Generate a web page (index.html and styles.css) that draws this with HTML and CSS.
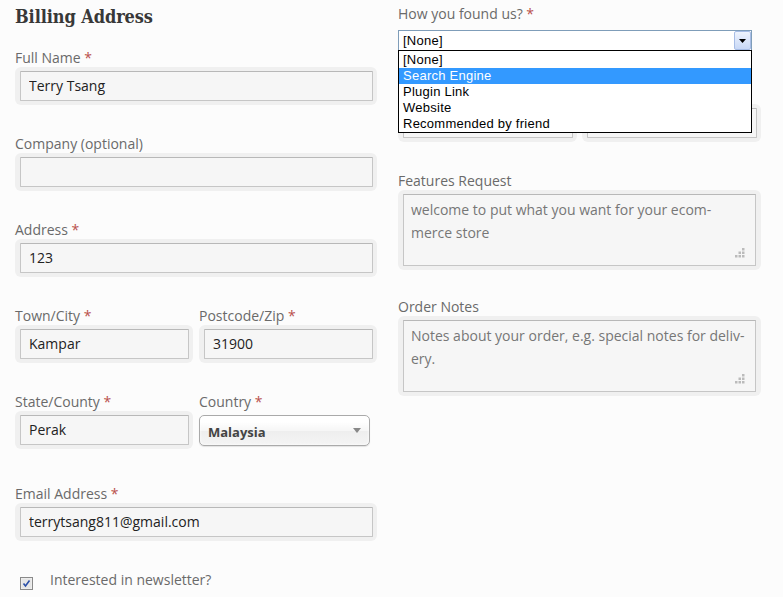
FILE: index.html
```html
<!DOCTYPE html>
<html lang="en">
<head>
<meta charset="utf-8">
<title>Billing Address</title>
<link rel="stylesheet" href="styles.css">
</head>
<body>
<div class="page">
  <div class="col col-left">
    <h3 class="title">Billing Address</h3>

    <div class="field">
      <div class="lbl">Full Name <span class="req">*</span></div>
      <div class="wrap"><input class="inp" type="text" value="Terry Tsang"></div>
    </div>

    <div class="field">
      <div class="lbl">Company (optional)</div>
      <div class="wrap"><input class="inp" type="text" value=""></div>
    </div>

    <div class="field">
      <div class="lbl">Address <span class="req">*</span></div>
      <div class="wrap"><input class="inp" type="text" value="123"></div>
    </div>

    <div class="row">
      <div class="field half">
        <div class="lbl">Town/City <span class="req">*</span></div>
        <div class="wrap"><input class="inp" type="text" value="Kampar"></div>
      </div>
      <div class="field half">
        <div class="lbl">Postcode/Zip <span class="req">*</span></div>
        <div class="wrap"><input class="inp" type="text" value="31900"></div>
      </div>
    </div>

    <div class="row row-tall">
      <div class="field half">
        <div class="lbl">State/County <span class="req">*</span></div>
        <div class="wrap"><input class="inp" type="text" value="Perak"></div>
      </div>
      <div class="field half">
        <div class="lbl">Country <span class="req">*</span></div>
        <div class="country">
          <span class="country-text">Malaysia</span>
          <span class="country-arrow"></span>
        </div>
      </div>
    </div>

    <div class="field">
      <div class="lbl">Email Address <span class="req">*</span></div>
      <div class="wrap"><input class="inp" type="text" value="terrytsang811@gmail.com"></div>
    </div>

    <div class="check-row">
      <svg class="checkbox" width="13" height="13" viewBox="0 0 13 13">
        <rect x="0.5" y="0.5" width="12" height="12" fill="#f4f4f4" stroke="#8a8a8a"/>
        <rect x="1.5" y="1.5" width="10" height="10" fill="#e6e6e6"/>
        <path d="M3.5 6.5 L5.5 9 L9.5 3.5" fill="none" stroke="#2a4fa8" stroke-width="1.6"/>
      </svg>
      <span class="check-text">Interested in newsletter?</span>
    </div>
  </div>

  <div class="col col-right">
    <div class="lbl">How you found us? <span class="req">*</span></div>
    <div class="select-holder">
      <div class="winselect">
        <span class="winselect-text">[None]</span>
        <span class="winselect-btn">
          <svg width="7" height="4" viewBox="0 0 7 4"><path d="M0 0 H7 L3.5 4 Z" fill="#000"/></svg>
        </span>
      </div>
      <ul class="winlist">
        <li>[None]</li>
        <li class="on">Search Engine</li>
        <li>Plugin Link</li>
        <li>Website</li>
        <li>Recommended by friend</li>
      </ul>
    </div>

    <div class="row hidden-row">
      <div class="wrap half-wrap"><input class="inp" type="text" value=""></div>
      <div class="wrap half-wrap"><input class="inp" type="text" value=""></div>
    </div>

    <div class="field tfield">
      <div class="lbl">Features Request</div>
      <div class="wrap twrap">
        <div class="ta">welcome to put what you want for your ecom&shy;merce store
          <svg class="grip" width="10" height="10" viewBox="0 0 10 10"><g fill="#bbbbbb"><rect x="7" y="0" width="2.5" height="2.5"/><rect x="3.5" y="3.5" width="2.5" height="2.5"/><rect x="7" y="3.5" width="2.5" height="2.5"/><rect x="0" y="7" width="2.5" height="2.5"/><rect x="3.5" y="7" width="2.5" height="2.5"/><rect x="7" y="7" width="2.5" height="2.5"/></g></svg>
        </div>
      </div>
    </div>

    <div class="field tfield tfield2">
      <div class="lbl">Order Notes</div>
      <div class="wrap twrap">
        <div class="ta">Notes about your order, e.g. special notes for deliv&shy;ery.
          <svg class="grip" width="10" height="10" viewBox="0 0 10 10"><g fill="#bbbbbb"><rect x="7" y="0" width="2.5" height="2.5"/><rect x="3.5" y="3.5" width="2.5" height="2.5"/><rect x="7" y="3.5" width="2.5" height="2.5"/><rect x="0" y="7" width="2.5" height="2.5"/><rect x="3.5" y="7" width="2.5" height="2.5"/><rect x="7" y="7" width="2.5" height="2.5"/></g></svg>
        </div>
      </div>
    </div>
  </div>
</div>
</body>
</html>
```

FILE: styles.css
```css
html, body {
  margin: 0;
  padding: 0;
  background: #fcfcfc;
}
body {
  font-family: "Open Sans", "Liberation Sans", sans-serif;
  font-size: 14px;
  color: #6a6a6a;
}
.page {
  display: flex;
  gap: 21px;
  padding: 5px 0 0 15px;
}
.col-left {
  width: 362px;
  display: flex;
  flex-direction: column;
}
.col-right {
  width: 363px;
  display: flex;
  flex-direction: column;
}
.title {
  margin: 0 0 20px 0;
  font-family: "DejaVu Serif", serif;
  font-stretch: condensed;
  font-weight: bold;
  font-size: 18px;
  line-height: 24px;
  color: #383838;
  letter-spacing: -0.1px;
}
.lbl {
  line-height: 18px;
  height: 18px;
  color: #6a6a6a;
  white-space: nowrap;
}
.req {
  color: #b9504c;
}
.field {
  display: flex;
  flex-direction: column;
  margin-bottom: 30px;
}
.wrap {
  background: #f0f0f0;
  border-radius: 6px;
  padding: 4px 4px 4px 5px;
}
.inp {
  display: block;
  box-sizing: border-box;
  width: 100%;
  height: 30px;
  margin: 0;
  padding: 0 8px 2px 8px;
  border: 1px solid #c6c6c6;
  border-top-color: #b8b8b8;
  border-radius: 1px;
  background: #f6f6f6;
  font-family: "Open Sans", "Liberation Sans", sans-serif;
  font-size: 14px;
  color: #222;
  outline: none;
}
.row {
  display: flex;
  gap: 6px;
}
.row .field {
  margin-bottom: 30px;
}
.row-tall .field {
  margin-bottom: 36px;
}
.half {
  width: 178px;
}
.country {
  margin-top: 4px;
  box-sizing: border-box;
  width: 171px;
  height: 31px;
  border: 1px solid #aaa;
  border-radius: 5px;
  background: linear-gradient(#ffffff 20%, #f6f6f6 50%, #eeeeee 52%, #f4f4f4 100%);
  box-shadow: 0 0 3px #fff inset, 0 1px 1px rgba(0,0,0,0.1);
  display: flex;
  align-items: center;
  justify-content: space-between;
  padding: 0 8px 0 8px;
}
.country-text {
  font-family: "Open Sans", "Liberation Sans", sans-serif;
  font-weight: bold;
  font-size: 13px;
  color: #444;
  padding-top: 2px;
}
.country-arrow {
  width: 0;
  height: 0;
  border-left: 4px solid transparent;
  border-right: 4px solid transparent;
  border-top: 5px solid #888;
}
.check-row {
  display: flex;
  align-items: center;
  margin-top: -1px;
  height: 20px;
  padding-left: 5px;
}
.checkbox {
  display: block;
  margin-top: 6px;
}
.check-text {
  margin-left: 17px;
  color: #6a6a6a;
  line-height: 18px;
}

/* right column */
.select-holder {
  position: relative;
  margin-top: 7px;
  width: 354px;
}
.winselect {
  box-sizing: border-box;
  height: 21px;
  border: 1px solid #7f9db9;
  background: #fff;
  display: flex;
  align-items: center;
  justify-content: space-between;
  padding-left: 4px;
  font-family: "Liberation Sans", Arial, sans-serif;
  font-size: 13px;
  letter-spacing: 0.25px;
  color: #000;
}
.winselect-btn {
  box-sizing: border-box;
  width: 17px;
  height: 19px;
  border: 1px solid #a7bde6;
  border-radius: 2px;
  background: linear-gradient(#eef3fd, #c8d8f6);
  display: flex;
  align-items: center;
  justify-content: center;
}
.winselect-btn svg {
  display: block;
  margin-top: 1px;
}
.winlist {
  position: absolute;
  left: 0;
  top: 20px;
  box-sizing: border-box;
  width: 354px;
  margin: 0;
  padding: 1px 0 0 0;
  list-style: none;
  border: 1px solid #000;
  background: #fff;
  font-family: "Liberation Sans", Arial, sans-serif;
  font-size: 13px;
  letter-spacing: 0.25px;
  color: #000;
  z-index: 5;
}
.winlist li {
  height: 16px;
  line-height: 16px;
  padding-left: 4px;
}
.winlist li.on {
  background: #3399ff;
  color: #fff;
}
.hidden-row {
  margin-top: 53px;
  gap: 5px;
}
.half-wrap {
  width: 170px;
}
.tfield {
  margin-top: 30px;
  margin-bottom: 0;
}
.tfield .lbl {
  margin-bottom: 0;
}
.tfield2 {
  margin-top: 28px;
}
.twrap {
  padding: 4px 5px;
}
.ta {
  position: relative;
  box-sizing: border-box;
  height: 72px;
  border: 1px solid #c6c6c6;
  border-top-color: #b8b8b8;
  background: #f6f6f6;
  padding: 3px 9px 0 7px;
  line-height: 23px;
  color: #777;
  hyphens: manual;
}
.grip {
  position: absolute;
  right: 10px;
  bottom: 7px;
  display: block;
}
```
